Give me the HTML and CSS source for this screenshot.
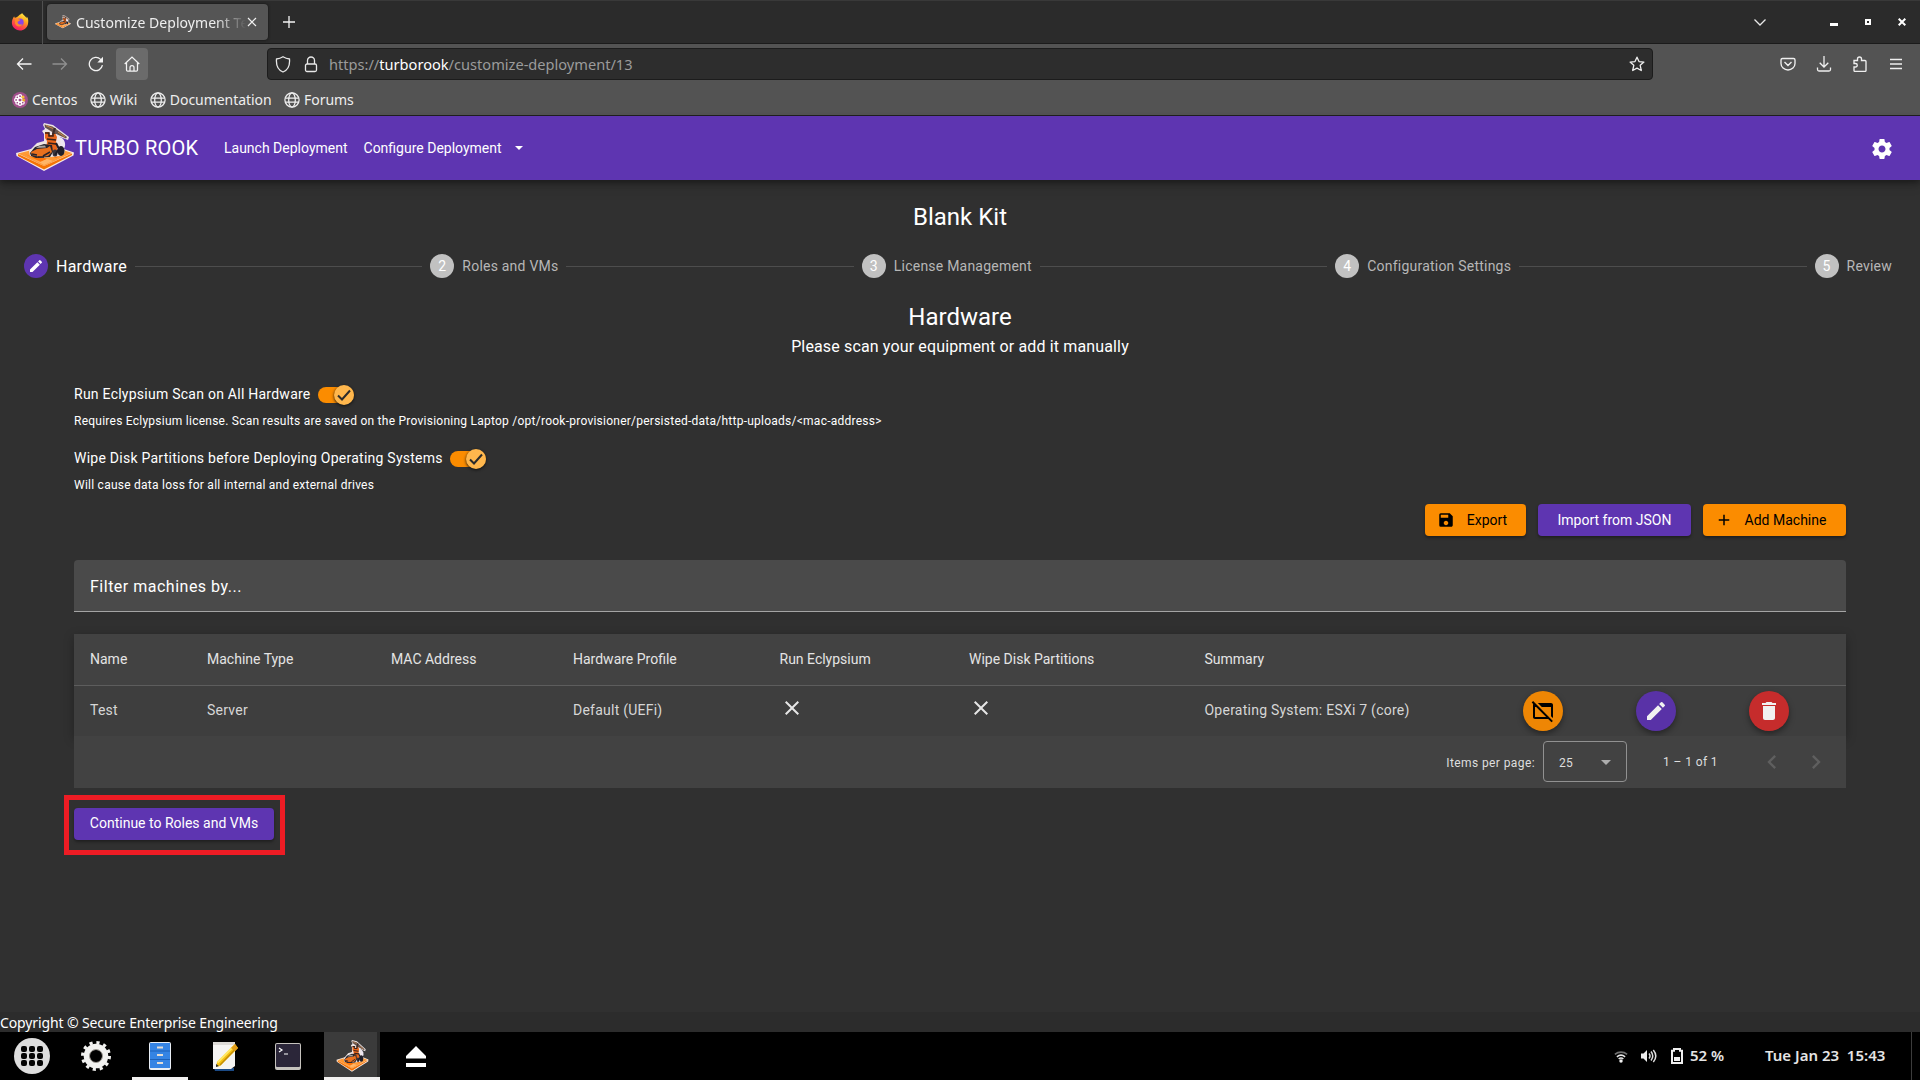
FILE: index.html
```html
<!DOCTYPE html>
<html lang="en">
<head>
<meta charset="utf-8">
<title>Customize Deployment Te</title>
<link rel="stylesheet" href="styles.css">
</head>
<body>
<svg class="defs" width="0" height="0" aria-hidden="true">
  <defs>
    <linearGradient id="fox" x1=".8" y1="0" x2=".3" y2="1"><stop offset="0" stop-color="#fff44f"/><stop offset=".35" stop-color="#ffb01f"/><stop offset=".65" stop-color="#ff5a3c"/><stop offset="1" stop-color="#f5156c"/></linearGradient>
    <symbol id="rook" viewBox="0 0 60 50">
      <path d="M1 30L16 26 46 25 59 29.500 58.500 32.500 29 48 1.500 33z" fill="#f6e9e4"/>
      <path d="M3 30.500L17 27 45 26 57 30 29 43z" fill="#ff9a36"/>
      <path d="M3 31L29 43 57 30.500V32L29 46.500 3 33z" fill="#f57405"/>
      <path d="M10 31l8 3 6-2 8 4-6 3M41 29l8 2-8 4-7-3" fill="#ff7508"/>
      <path d="M18 36l7 3 7-3 6 2-9 4z" fill="#ffb568"/>
      <path d="M44 14a6.500 7.500 0 0 1 4 13L42 26z" fill="#eee7f2"/>
      <path d="M29 0l9 2 16 12-1 3-8-3 1 8 4 7-4 4-20 2-11-2-1-5 8-8 7-2 0-7-2-3 3-2-2-4z" fill="#eee5e4"/>
      <path d="M30 9h4v3h3v-2h3l2 4-1 5 2 10H31l1-11-2-3z" fill="#e8661b"/>
      <path d="M30 10h4v3h4v-3h3M32 16l9 1M33 20l8 1" fill="none" stroke="#3a2119" stroke-width="1.600"/>
      <path d="M29.500 1.500l8 2L52 14l-1 1.500-13-6-8-5z" fill="#65534d"/>
      <path d="M40 5l-2 6" stroke="#3c2c29" stroke-width="2"/>
      <path d="M31 2.500l7 3M43 9l7 5" stroke="#c98545"/>
      <path d="M15 30l5-6 9-3 8 1 1 7-3 5-14 1-5-2z" fill="#27252c"/>
      <path d="M16 29l6-3 10-1 3-2 2 6-4 4-8 1-8-2z" fill="#e9701d"/>
      <path d="M21 25l3-2 6-.5 1 2z" fill="#a9a3a0"/>
      <path d="M17 31l5 1M28 33l7-4M23 34h6" stroke="#29232a" stroke-width="1.500"/>
      <ellipse cx="46" cy="28" rx="3.500" ry="5" fill="#211f28"/>
      <ellipse cx="40" cy="30" rx="2.500" ry="3.500" fill="#38353e"/>
      <path d="M41 20l3 6-4 6" stroke="#1f1d26" stroke-width="2" fill="none"/>
    </symbol>
    <symbol id="globe" viewBox="0 0 16 16"><g fill="none" stroke="#efefef" stroke-width="1.250"><circle cx="8" cy="8" r="7.100"/><ellipse cx="8" cy="8" rx="3.300" ry="7.100"/><path d="M1.200 6h13.600M1.200 10h13.600"/></g></symbol>
    <symbol id="pencil" viewBox="0 0 24 24"><path d="M3 17.250V21h3.750L17.810 9.940l-3.750-3.750L3 17.250zM20.710 7.040a.996.996 0 0 0 0-1.410l-2.340-2.340a.996.996 0 0 0-1.410 0l-1.830 1.830 3.750 3.750 1.830-1.830z"/></symbol>
    <symbol id="close" viewBox="0 0 24 24"><path d="M19 6.410L17.590 5 12 10.590 6.410 5 5 6.410 10.590 12 5 17.590 6.410 19 12 13.410 17.590 19 19 17.590 13.410 12z"/></symbol>
    <symbol id="gear" viewBox="0 0 24 24"><path d="M19.430 12.980c.04-.32.07-.64.07-.98s-.03-.66-.07-.98l2.110-1.650c.19-.15.24-.42.12-.64l-2-3.460c-.12-.22-.39-.3-.61-.22l-2.490 1c-.52-.4-1.080-.73-1.690-.98l-.38-2.650C14.460 2.180 14.250 2 14 2h-4c-.25 0-.46.18-.49.42l-.38 2.650c-.61.25-1.170.59-1.690.98l-2.490-1c-.23-.09-.49 0-.61.22l-2 3.460c-.13.22-.07.49.12.64l2.110 1.650c-.04.32-.07.65-.07.98s.03.66.07.98l-2.110 1.650c-.19.15-.24.42-.12.64l2 3.460c.12.22.39.3.61.22l2.490-1c.52.4 1.080.73 1.690.98l.38 2.650c.03.24.24.42.49.42h4c.25 0 .46-.18.49-.42l.38-2.650c.61-.25 1.170-.59 1.690-.98l2.490 1c.23.09.49 0 .61-.22l2-3.460c.12-.22.07-.49-.12-.64l-2.110-1.650zM12 15.500c-1.930 0-3.500-1.570-3.500-3.500s1.570-3.500 3.500-3.500 3.500 1.570 3.500 3.500-1.570 3.500-3.500 3.500z"/></symbol>
  </defs>
</svg>

<div class="tabbar">
  <div class="fox"><svg width="18" height="18" viewBox="0 0 18 18"><path d="M9 1.500c1-.2 1.600-.8 2-1.500 1 1.500 3.600 3.200 4.500 5 .3-.4.300-1 .2-1.500C17.500 5.500 17.500 8 17 11c-1 4-4 6.500-8 6.500S1.500 14.500 1 11C.5 8 1.500 5.500 3.200 3.200c0 .9.300 1.300.8 1.600C5.300 4.500 6.500 4.200 9 1.500z" fill="url(#fox)"/><circle cx="9" cy="9.300" r="3.700" fill="#8a45e8"/><path d="M4 6.500c2-1.500 4 0 5.500.5L6.500 9c.5 3 3 3 5 2-1 3-6 3.500-7.500-.5z" fill="#ff8a2a"/></svg></div>
  <div class="tab"><svg width="16" height="16"><use href="#rook"/></svg><span class="tab-title">Customize Deployment Te</span><svg class="tab-x" width="10" height="10" viewBox="0 0 10 10"><path d="M1 1l8 8M9 1l-8 8" stroke="#f2f2f2" stroke-width="1.200"/></svg></div>
  <svg class="newtab" width="12" height="12" viewBox="0 0 12 12"><path d="M6 0v12M0 6h12" stroke="#f4f4f4" stroke-width="1.300"/></svg>
  <div class="winctl">
    <svg width="14" height="9" viewBox="0 0 14 9"><path d="M1.500 1.500L7 7l5.500-5.500" fill="none" stroke="#e8e8e8" stroke-width="1.300"/></svg>
    <svg width="8" height="8" viewBox="0 0 8 8"><path d="M0 5h8v3H0z" fill="#fff"/></svg>
    <svg width="6" height="6" viewBox="0 0 6 6"><path d="M1 1h4v4H1z" fill="none" stroke="#fff" stroke-width="2"/></svg>
    <svg width="8" height="8" viewBox="0 0 8 8"><path d="M.7.7l6.600 6.600M7.300.7L.7 7.300" stroke="#fff" stroke-width="2"/></svg>
  </div>
</div>

<div class="chrome">
  <div class="nav">
    <svg width="16" height="14" viewBox="0 0 16 14"><path d="M15.500 7H1.500M7 1.500L1.500 7 7 12.500" fill="none" stroke="#f5f5f5" stroke-width="1.300"/></svg>
    <svg width="16" height="14" viewBox="0 0 16 14"><path d="M.5 7h14M9 1.500L14.500 7 9 12.500" fill="none" stroke="#909090" stroke-width="1.300"/></svg>
    <svg width="16" height="16" viewBox="0 0 16 16"><path d="M14.400 9.200A6.600 6.600 0 1 1 12.600 3.400L14 4.800" fill="none" stroke="#f3f3f3" stroke-width="1.300"/><path d="M15 .8v5.700H9.300z" fill="#f3f3f3"/></svg>
    <div class="home"><svg width="16" height="16" viewBox="0 0 16 16"><path d="M.7 8L8 1l7.300 7M2.500 6.500V14q0 1.200 1.200 1.200h8.600q1.200 0 1.200-1.200V6.500M6 15v-3.500a2 2 0 0 1 4 0V15" fill="none" stroke="#f3f3f3" stroke-width="1.250"/></svg></div>
    <div class="url">
      <svg width="16" height="17" viewBox="0 0 16 17"><path d="M8 .8c2.200 1.400 4.200 2 6.500 2.200C15 9 13 14 8 16 3 14 1 9 1.500 3 3.800 2.800 5.800 2.200 8 .8z" fill="none" stroke="#e8e8e8" stroke-width="1.300"/></svg>
      <svg class="lock" width="14" height="17" viewBox="0 0 14 17"><path d="M3.500 8V4.500a3.500 3.500 0 0 1 7 0V8" fill="none" stroke="#e8e8e8" stroke-width="1.300"/><rect x="1.500" y="8" width="11" height="7.500" rx="1.500" fill="none" stroke="#e8e8e8" stroke-width="1.300"/></svg>
      <span class="addr">https://<b>turborook</b>/customize-deployment/13</span>
      <svg class="star" width="16" height="16" viewBox="0 0 16 16"><path d="M8 1.200l2 4.400 4.900.5-3.700 3.200 1.100 5.200L8 12.100l-4.300 2.400 1.100-5.200L1.100 6.100 6 5.600z" fill="none" stroke="#f0f0f0" stroke-width="1.300" stroke-linejoin="round"/></svg>
    </div>
    <div class="tools">
      <svg width="16" height="16" viewBox="0 0 16 16"><path d="M2.500 2.500h11q1.500 0 1.500 1.500v3.500a7 6.500 0 0 1-14 0V4q0-1.500 1.500-1.500zM4.500 6L8 9.500 11.500 6" fill="none" stroke="#efefef" stroke-width="1.350"/></svg>
      <svg width="16" height="16" viewBox="0 0 16 16"><path d="M8 0v11M3.700 6.700L8 11l4.300-4.300M1.500 11.500v2q0 1.500 1.500 1.500h10q1.500 0 1.500-1.500v-2" fill="none" stroke="#efefef" stroke-width="1.300"/></svg>
      <svg width="16" height="16" viewBox="0 0 16 16"><path d="M2 4.500h3.500V3a2 2 0 0 1 4 0v1.500H13q1 0 1 1v9q0 .9-1 .9H3q-1 0-1-.9V11h1.500a1.700 1.700 0 0 0 0-3.500H2z" fill="none" stroke="#efefef" stroke-width="1.350"/></svg>
      <svg width="16" height="16" viewBox="0 0 16 16"><path d="M2 3.500h12M2 8h12M2 12.500h12" stroke="#efefef" stroke-width="1.300"/></svg>
    </div>
  </div>
  <div class="bookmarks">
    <span class="bm"><svg width="16" height="16" viewBox="0 0 16 16"><circle cx="8" cy="8" r="8" fill="#a14f8c"/><g fill="none" stroke="#fff" stroke-width="1.200"><circle cx="8" cy="8" r="2.200"/><circle cx="8" cy="4.200" r="1.600"/><circle cx="8" cy="11.800" r="1.600"/><circle cx="4.200" cy="8" r="1.600"/><circle cx="5.300" cy="5.300" r="1.500"/><circle cx="10.700" cy="10.700" r="1.500"/><circle cx="5.300" cy="10.700" r="1.500"/></g><circle cx="11" cy="5" r="1.600" fill="#f5c13b"/><circle cx="11.800" cy="8" r="1.500" fill="#efa724"/></svg>Centos</span>
    <span class="bm"><svg width="16" height="16"><use href="#globe"/></svg>Wiki</span>
    <span class="bm"><svg width="16" height="16"><use href="#globe"/></svg>Documentation</span>
    <span class="bm"><svg width="16" height="16"><use href="#globe"/></svg>Forums</span>
  </div>
</div>

<header class="appbar">
  <svg width="60" height="50"><use href="#rook"/></svg>
  <span class="brand">TURBO ROOK</span>
  <span class="link">Launch Deployment</span>
  <span class="link">Configure Deployment</span>
  <i class="caret"></i>
  <svg class="settings" width="24" height="24"><use href="#gear"/></svg>
</header>

<main class="page">
  <h1 class="title kit">Blank Kit</h1>
  <div class="stepper">
    <div class="step active"><i class="dot"><svg width="16" height="16"><use href="#pencil"/></svg></i><span>Hardware</span></div><i class="line"></i>
    <div class="step"><i class="dot">2</i><span>Roles and VMs</span></div><i class="line"></i>
    <div class="step"><i class="dot">3</i><span>License Management</span></div><i class="line"></i>
    <div class="step"><i class="dot">4</i><span>Configuration Settings</span></div><i class="line"></i>
    <div class="step"><i class="dot">5</i><span>Review</span></div>
  </div>
  <h2 class="title">Hardware</h2>
  <p class="subtitle">Please scan your equipment or add it manually</p>

  <section class="content">
    <div class="option"><span>Run Eclypsium Scan on All Hardware</span><i class="toggle"><i class="thumb"><svg width="16" height="16" viewBox="0 0 16 16"><path d="M2 8.500l4 4 8-9" fill="none" stroke="#2b2b2b" stroke-width="2"/></svg></i></i></div>
    <p class="hint">Requires Eclypsium license. Scan results are saved on the Provisioning Laptop /opt/rook-provisioner/persisted-data/http-uploads/&lt;mac-address&gt;</p>
    <div class="option"><span>Wipe Disk Partitions before Deploying Operating Systems</span><i class="toggle"><i class="thumb"><svg width="16" height="16" viewBox="0 0 16 16"><path d="M2 8.500l4 4 8-9" fill="none" stroke="#2b2b2b" stroke-width="2"/></svg></i></i></div>
    <p class="hint hint-last">Will cause data loss for all internal and external drives</p>

    <div class="actions">
      <span class="btn orange w-export"><svg width="18" height="18" viewBox="0 0 24 24"><path d="M17 3H5a2 2 0 0 0-2 2v14a2 2 0 0 0 2 2h14c1.100 0 2-.9 2-2V7l-4-4zm-5 16c-1.660 0-3-1.340-3-3s1.340-3 3-3 3 1.340 3 3-1.340 3-3 3zm3-10H5V5h10v4z"/></svg>Export</span>
      <span class="btn purple w-import">Import from JSON</span>
      <span class="btn orange w-add"><svg width="18" height="18" viewBox="0 0 24 24"><path d="M19 13h-6v6h-2v-6H5v-2h6V5h2v6h6v2z"/></svg>Add Machine</span>
    </div>

    <div class="filter">Filter machines by...</div>

    <div class="table">
      <div class="row head"><span>Name</span><span>Machine Type</span><span>MAC Address</span><span>Hardware Profile</span><span>Run Eclypsium</span><span>Wipe Disk Partitions</span><span>Summary</span></div>
      <div class="row body">
        <span>Test</span><span>Server</span><span></span><span>Default (UEFi)</span>
        <span><svg class="cross" width="24" height="24"><use href="#close"/></svg></span>
        <span><svg class="cross" width="24" height="24"><use href="#close"/></svg></span>
        <span>Operating System: ESXi 7 (core)</span>
        <i class="fab f-orange"><svg width="24" height="24" viewBox="0 0 24 24"><path d="M6.830 4H20c1.110 0 2 .9 2 2v12c0 .34-.09.66-.23.94L20 17.170V8h-9.170l-4-4zM20.490 23.310L17.170 20H4c-1.110 0-2-.9-2-2V6c0-.34.08-.66.23-.94L.69 3.510 2.100 2.100l19.800 19.800-1.410 1.410zM15.170 18l-10-10H4v10h11.170z"/></svg></i>
        <i class="fab f-purple"><svg width="24" height="24"><use href="#pencil"/></svg></i>
        <i class="fab f-red"><svg width="24" height="24" viewBox="0 0 24 24"><path d="M6 19c0 1.100.9 2 2 2h8c1.100 0 2-.9 2-2V7H6v12zM19 4h-3.500l-1-1h-5l-1 1H5v2h14V4z"/></svg></i>
      </div>
    </div>
    <div class="paginator">
      <span class="per">Items per page:</span>
      <span class="select">25<i class="arrow"></i></span>
      <span class="range">1 – 1 of 1</span>
      <svg class="prev" width="28" height="28" viewBox="0 0 24 24"><path d="M15.410 7.410L14 6l-6 6 6 6 1.410-1.410L10.830 12z"/></svg>
      <svg width="28" height="28" viewBox="0 0 24 24"><path d="M10 6L8.590 7.410 13.170 12l-4.580 4.590L10 18l6-6z"/></svg>
    </div>
    <div class="highlight"><span class="btn purple">Continue to Roles and VMs</span></div>
  </section>
</main>
<footer class="copyright">Copyright © Secure Enterprise Engineering</footer>

<div class="taskbar">
  <div class="app"><svg width="36" height="36" viewBox="0 0 36 36"><circle cx="18" cy="18" r="18" fill="#dedede"/><g fill="#050505"><rect x="7" y="8" width="6" height="6" rx="2"/><rect x="15" y="8" width="6" height="6" rx="2"/><rect x="23" y="8" width="6" height="6" rx="2"/><rect x="7" y="15" width="6" height="6" rx="2"/><rect x="15" y="15" width="6" height="6" rx="2"/><rect x="23" y="15" width="6" height="6" rx="2"/><rect x="7" y="22" width="6" height="6" rx="2"/><rect x="15" y="22" width="6" height="6" rx="2"/><rect x="23" y="22" width="6" height="6" rx="2"/></g></svg></div>
  <div class="app"><svg width="32" height="32" viewBox="0 0 32 32"><circle cx="16" cy="16" r="9.300" fill="none" stroke="#f2f2f0" stroke-width="6"/><circle cx="16" cy="16" r="13.400" fill="none" stroke="#f2f2f0" stroke-width="3.200" stroke-dasharray="3.200 3.816"/><circle cx="16" cy="16" r="6.500" fill="none" stroke="#99958f" stroke-width="1"/></svg></div>
  <div class="app"><svg width="22" height="28" viewBox="0 0 22 28"><rect width="22" height="28" rx="2" fill="#e9eef5"/><path d="M1 1h20v25H1z" fill="#3584e4"/><path d="M1 9h20M1 17.500h20" stroke="#1d61b8"/><path d="M8 4.500h6v2H8zM8 12h6v2H8zM8 20h6v2H8z" fill="#e4ddd4"/></svg><i class="running"></i></div>
  <div class="app notes"><svg width="27" height="30" viewBox="0 0 27 30"><path d="M2 27h20v3H3z" fill="#1b4a85"/><path d="M1 1h22v24l-4 3H1z" fill="#f5f4f2"/><path d="M1 1h22v3H1z" fill="#dddad6"/><path d="M23 3l3 4L8 25l-4 1 1-5z" fill="#f5c211"/><path d="M22 5L5.500 21.500" stroke="#ffe868" stroke-width="2"/><path d="M24.500 7L8 24" stroke="#c48d08" stroke-width="1.500"/><path d="M23 3l3 4-3 3-4-3z" fill="#e09c19"/><path d="M4 23v3l3-1z" fill="#333"/></svg></div>
  <div class="app"><svg width="26" height="27" viewBox="0 0 26 27"><rect width="26" height="27" rx="2" fill="#c6c3be"/><rect x="1" y="1" width="24" height="23" rx="1" fill="#2b2639"/><path d="M4 5l3 2-3 2M9 11h4" fill="none" stroke="#fff" stroke-width="1.200"/></svg></div>
  <div class="app current"><svg width="33" height="33" viewBox="0 0 60 50" preserveAspectRatio="none"><use href="#rook" width="60" height="50"/></svg><i class="running"></i></div>
  <div class="app"><svg width="20" height="21" viewBox="0 0 20 21"><path d="M10 0l10 10v2.500H0V10zM0 17h20v4H0z" fill="#fff"/></svg></div>
  <div class="tray">
    <svg class="wifi" width="14" height="13" viewBox="0 0 16 14"><g fill="none" stroke-width="1.800"><path d="M1 4.500a11 11 0 0 1 14 0" stroke="#727272"/><path d="M3.300 7.300a7.500 7.500 0 0 1 9.400 0M5.300 9.700a4.500 4.500 0 0 1 5.400 0" stroke="#e8e8e8"/></g><circle cx="8" cy="12" r="2" fill="#f0f0f0"/></svg>
    <svg class="vol" width="16" height="14" viewBox="0 0 16 14"><path d="M0 4.500h2.500L6 1v12L2.500 9.500H0z" fill="#eee"/><path d="M8 4.500q2 2.500 0 5M10 2.500q3.500 4.500 0 9M12.300 1q5 6 0 12" fill="none" stroke="#ddd" stroke-width="1.500"/></svg>
    <svg class="bat" width="12" height="16" viewBox="0 0 12 16"><path d="M1 2.800h2V1h6v1.800h2V15H1z" fill="none" stroke="#eee" stroke-width="2"/><path d="M3 9h6v4H3z" fill="#eee"/></svg>
    <span class="pct">52 %</span><span class="date">Tue Jan 23&nbsp; 15:43</span><i class="edge"></i>
  </div>
</div>
</body>
</html>
```
FILE: styles.css
```css
* { box-sizing: border-box; }
body { margin: 0; width: 1920px; height: 1080px; overflow: hidden; display: flex; flex-direction: column; background: #303030; color: #fff; font-family: Roboto, sans-serif; }
svg { display: block; flex: none; }
i { font-style: normal; }
h1, h2, p { margin: 0; font-weight: 400; }
.defs { position: absolute; }

.tabbar, .chrome, .copyright, .taskbar { font-family: "Noto Sans", sans-serif; }
.tabbar { height: 44px; flex: none; display: flex; align-items: center; background: #2b2b2b; border-top: 1px solid #393939; border-bottom: 1px solid #1b1b1b; }
.fox { width: 43px; height: 43px; padding: 12px 0 0 11px; border-right: 1px solid #505050; }
.tab { width: 221px; height: 36px; margin-left: 4px; padding: 0 11px 0 8px; display: flex; align-items: center; border-radius: 4px; background: #555; box-shadow: 0 0 3px #111; }
.tab-title { width: 170px; margin-left: 5px; padding-top: 1px; white-space: nowrap; font-size: 14px; line-height: 24px; letter-spacing: .05px; color: #eee; -webkit-mask-image: linear-gradient(90deg, #000 140px, transparent 170px); mask-image: linear-gradient(90deg, #000 140px, transparent 170px); }
.tab-x { margin-left: 1px; }
.newtab { margin-left: 15px; }
.winctl { margin-left: auto; display: flex; align-items: center; padding-right: 14px; }
.winctl svg:nth-child(1) { margin-right: 63px; }
.winctl svg:nth-child(2) { margin-right: 27px; }
.winctl svg:nth-child(3) { margin-right: 27px; }

.chrome { height: 72px; flex: none; background: #535353; border-bottom: 1px solid #202020; }
.nav { height: 40px; display: flex; align-items: center; padding: 0 16px; }
.nav > svg { margin-right: 20px; }
.nav > svg:nth-child(3) { margin-right: 12px; }
.home { width: 32px; height: 32px; padding: 8px; border-radius: 4px; background: #6b6b6b; }
.url { width: 1386px; height: 32px; margin-left: 119px; padding: 0 7px; display: flex; align-items: center; border: 1px solid #1c1c1c; border-radius: 4px; background: #2d2d2d; }
.lock { margin: 0 11px 0 13px; }
.addr { font-size: 14.6px; line-height: 24px; color: #9b9b9b; }
.addr b { font-weight: 400; color: #fff; }
.star { margin-left: auto; }
.tools { margin-left: auto; display: flex; gap: 20px; }
.bookmarks { display: flex; align-items: center; height: 31px; padding: 1px 0 0 12px; font-size: 14px; letter-spacing: -.05px; color: #eee; }
.bm { display: flex; align-items: center; gap: 4px; line-height: 24px; margin-right: 12.5px; }

.appbar { position: relative; height: 64px; flex: none; display: flex; align-items: center; padding: 0 26px 0 15px; background: #5e35b1; box-shadow: 0 3px 5px rgba(0,0,0,.3), 0 6px 10px rgba(0,0,0,.14); }
.brand { width: 149px; font-size: 20px; letter-spacing: .25px; }
.link { margin-right: 16px; font-size: 14px; }
.caret { border: 4px solid transparent; border-top-color: #fff; border-bottom: 0; margin-left: -3px; }
.settings { margin: 2px 0 0 auto; fill: #fff; }

.page { flex: 1; padding-top: 22px; }
.title { font-size: 24px; line-height: 30px; text-align: center; }
.kit { height: 28px; }
.stepper { display: flex; align-items: center; height: 72px; padding: 0 28px 0 24px; }
.step { display: flex; align-items: center; gap: 8px; font-size: 14px; letter-spacing: .22px; color: #b7b7b7; white-space: nowrap; }
.step.active { font-size: 16px; color: #fff; letter-spacing: .25px; }
.dot { width: 24px; height: 24px; display: flex; align-items: center; justify-content: center; border-radius: 50%; background: #c1c1c1; color: #fff; }
.active .dot { background: #5e35b1; fill: #fff; }
.line { flex: 1; height: 1px; margin: 0 8px; background: #4d4d4d; }
.subtitle { font-size: 16px; line-height: 30px; text-align: center; letter-spacing: .14px; }

.content { padding: 20px 74px 0; }
.option { height: 24px; display: flex; align-items: center; font-size: 14px; letter-spacing: .25px; }
.toggle { width: 36px; height: 16px; margin: 2px 0 0 7px; display: flex; align-items: center; justify-content: flex-end; border-radius: 8px; background: #fb8c00; }
.thumb { width: 20px; height: 20px; padding: 2px; border-radius: 50%; background: #ffb74d; box-shadow: 0 1px 3px #111; }
.hint { height: 40px; font-size: 12px; line-height: 31px; letter-spacing: .245px; }
.hint-last { height: 34px; }
.actions { display: flex; justify-content: flex-end; gap: 12px; margin-bottom: 24px; }
.btn { height: 32px; display: flex; align-items: center; justify-content: center; border-radius: 4px; font-size: 14px; box-shadow: 0 2px 3px rgba(0,0,0,.35); white-space: nowrap; }
.orange { background: #fb8c00; color: #000; }
.purple { background: #5e35b1; color: #fff; }
.w-export { width: 101px; }
.w-export svg { margin: 0 12px 0 -7px; }
.w-import { width: 153px; }
.w-add { width: 143px; }
.w-add svg { margin: 0 12px 0 -8px; }
.filter { height: 52px; padding-left: 16px; margin-bottom: 22px; border-bottom: 1px solid #a4a4a4; border-radius: 4px 4px 0 0; background: #4a4a4a; font-size: 16px; line-height: 53px; letter-spacing: .5px; }
.table { background: #424242; box-shadow: 0 3px 10px rgba(0,0,0,.28); }
.row { display: grid; grid-template-columns: 117px 184px 182px 206.5px 189.5px 235.5px 318.5px 113px 113px 1fr; align-items: center; padding-left: 16px; font-size: 14px; letter-spacing: 0; color: #e4e4e4; white-space: nowrap; }
.head { height: 52px; border-bottom: 1px solid #5d5d5d; padding-bottom: 2px; }
.body { height: 50px; background: #3e3e3e; color: #d6d6d6; letter-spacing: .24px; }
.body span { margin-top: -2px; }
.cross { fill: #e6e6e6; margin-top: -5px; }
.fab { width: 40px; height: 40px; padding: 8px; border-radius: 50%; box-shadow: 0 3px 6px rgba(0,0,0,.4); }
.f-orange { background: #ee8604; fill: #000; }
.f-purple { background: #5932a7; fill: #f1f1f1; }
.f-red { background: #c62c2c; fill: #f1f1f1; }
.paginator { position: relative; height: 52px; display: flex; align-items: center; justify-content: flex-end; padding-right: 16px; background: #424242; font-size: 12px; letter-spacing: .4px; color: #dedede; fill: #5f5f5f; }
.per { padding-top: 1px; }
.select { width: 84px; height: 41px; margin: -1px 36px 0 8px; padding: 2px 15px 0; display: flex; align-items: center; justify-content: space-between; border: 1px solid #919191; border-radius: 4px; }
.arrow { border: 5px solid transparent; border-top-color: #adadad; border-bottom: 0; }
.range { margin-right: 40px; }
.prev { margin-right: 16px; }
.highlight { width: 221px; height: 60px; margin: 7px 0 0 -10px; padding: 8px 6px 0 5px; border: 5px solid #ed1c24; }
.highlight .btn { width: 200px; padding-bottom: 2px; }

.copyright { height: 20px; flex: none; background: #2c2c2c; font-size: 14px; line-height: 21px; letter-spacing: -.12px; }
.taskbar { height: 48px; flex: none; display: flex; background: #000; }
.app { position: relative; width: 64px; display: flex; align-items: center; justify-content: center; }
.notes { padding-left: 3px; }
.current { width: 56px; margin: 0 4px; padding-left: 3px; background: #3b3b3b; border-right: 3px solid #292929; }
.running { position: absolute; left: 4px; bottom: 0; width: 56px; height: 3px; background: #f2f1f0; }
.current .running { left: 0; }
.tray { margin-left: auto; display: flex; align-items: center; color: #e4e4e4; font-size: 15px; font-weight: 600; }
.wifi { margin-right: 13px; }
.vol { margin-right: 14px; }
.bat { margin-right: 7px; }
.pct { width: 75px; padding-bottom: 2px; }
.date { width: 146px; padding-bottom: 2px; }
.edge { width: 9px; height: 48px; border-left: 1px solid #3c3c3c; }
```
